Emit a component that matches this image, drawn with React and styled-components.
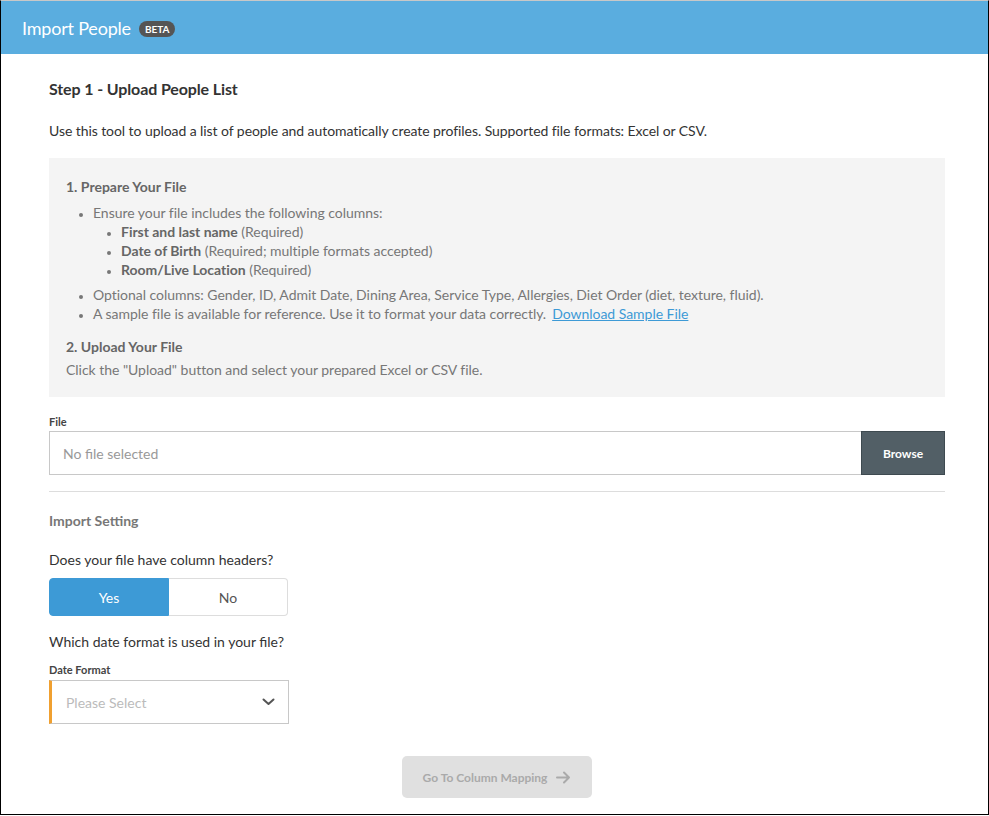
import React, { useState } from "react";
import styled, { createGlobalStyle } from "styled-components";

const Global = createGlobalStyle`
  html, body { margin: 0; padding: 0; background: #fff; }
  body { font-family: Lato, "Open Sans", Arial, sans-serif; color: #333; }
  * { box-sizing: border-box; }
`;

const Frame = styled.div`
  width: 989px;
  height: 815px;
  border-top: 1px solid #c8c8c8;
  border-left: 1px solid #000;
  border-right: 1px solid #000;
  border-bottom: 1px solid #000;
  display: flex;
  flex-direction: column;
  overflow: hidden;
`;

const Header = styled.header`
  height: 53px;
  background: #5aaddf;
  display: flex;
  align-items: center;
  padding-left: 21px;
  gap: 8px;
`;

const Title = styled.h1`
  margin: 0;
  font-size: 18px;
  font-weight: 400;
  color: #fff;
  letter-spacing: -0.2px;
`;

const Badge = styled.span`
  background: #555;
  color: #fff;
  font-size: 10px;
  font-weight: 700;
  border-radius: 9px;
  padding: 2px 6px;
  line-height: 12px;
  margin-top: 2px;
`;

const Content = styled.main`
  padding: 0 43px 0 48px;
  display: flex;
  flex-direction: column;
`;

const StepTitle = styled.h2`
  margin: 25px 0 0;
  font-size: 16px;
  font-weight: 700;
  color: #333;
  line-height: 20px;
  letter-spacing: -0.12px;
`;

const Intro = styled.p`
  margin: 22px 0 0;
  font-size: 14px;
  line-height: 20px;
  color: #333;
  letter-spacing: -0.07px;
`;

const InfoBox = styled.section`
  margin-top: 17px;
  background: #f4f4f4;
  padding: 19px 17px 18px;
  color: #777;
  font-size: 14px;
  line-height: 19px;
  letter-spacing: -0.03px;
`;

const InfoHead = styled.div`
  font-weight: 700;
  color: #666;
  font-size: 14px;
  line-height: 19px;
  letter-spacing: 0;
  margin-top: ${(p) => p.$mt || 0}px;
  margin-bottom: ${(p) => p.$mb || 0}px;
`;

const List = styled.ul`
  margin: ${(p) => p.$m || "0"};
  padding-left: ${(p) => p.$pl}px;
  list-style: disc;
  li::marker { font-size: 11px; }
`;

const Item = styled.li`
  line-height: 19px;
`;

const Strong = styled.b`
  font-weight: 700;
  color: #666;
`;

const Link = styled.a`
  color: #3d9ad6;
  text-decoration: underline;
  margin-left: 6px;
  cursor: pointer;
`;

const InfoText = styled.div`
  margin-top: 4px;
`;

const FieldLabel = styled.label`
  display: block;
  font-size: 11px;
  font-weight: 700;
  color: #444;
  line-height: 14px;
  margin: ${(p) => p.$mt}px 0 ${(p) => p.$mb}px;
`;

const FileRow = styled.div`
  display: flex;
  height: 44px;
  border: 1px solid #c8c8c8;
`;

const FileText = styled.div`
  flex: 1;
  display: flex;
  align-items: center;
  padding-left: 13px;
  color: #999;
  font-size: 14px;
`;

const BrowseButton = styled.button`
  width: 84px;
  margin: -1px -1px -1px 0;
  border: 1px solid #3e4a50;
  background: #525f66;
  color: #fff;
  font-family: inherit;
  font-weight: 700;
  font-size: 12px;
  cursor: pointer;
`;

const Divider = styled.hr`
  border: 0;
  border-top: 1px solid #ddd;
  margin: 16px 0 0;
`;

const SectionHead = styled.div`
  margin-top: 20px;
  font-size: 14px;
  font-weight: 700;
  color: #777;
  line-height: 18px;
`;

const Question = styled.div`
  margin-top: ${(p) => p.$mt}px;
  font-size: 14px;
  color: #333;
  line-height: 18px;
`;

const Toggle = styled.div`
  margin-top: 9px;
  display: flex;
  width: 239px;
  height: 38px;
`;

const ToggleOption = styled.button`
  flex: 1;
  font-family: inherit;
  font-size: 14px;
  cursor: pointer;
  border: 1px solid ${(p) => (p.$active ? "#3d9ad6" : "#ddd")};
  background: ${(p) => (p.$active ? "#3d9ad6" : "#fff")};
  color: ${(p) => (p.$active ? "#fff" : "#555")};
  border-radius: ${(p) => (p.$first ? "4px 0 0 4px" : "0 4px 4px 0")};
  ${(p) => (p.$first ? "" : "border-left: 0;")}
`;

const Select = styled.div`
  width: 240px;
  height: 44px;
  border: 1px solid #c8c8c8;
  border-left: 3px solid #f0a030;
  display: flex;
  align-items: center;
  justify-content: space-between;
  padding: 0 13px 0 14px;
  color: #bbb;
  font-size: 14px;
`;

const Footer = styled.div`
  display: flex;
  justify-content: center;
  margin-top: 32px;
`;

const NextButton = styled.button`
  width: 190px;
  height: 42px;
  border: 0;
  border-radius: 5px;
  background: #e0e0e0;
  color: #aaa;
  font-family: inherit;
  font-size: 12px;
  font-weight: 700;
  display: flex;
  align-items: center;
  justify-content: center;
  gap: 9px;
`;

export default function App() {
  const [headers, setHeaders] = useState(true);
  return (
    <>
      <Global />
      <Frame>
        <Header>
          <Title>Import People</Title>
          <Badge>BETA</Badge>
        </Header>
        <Content>
          <StepTitle>Step 1 - Upload People List</StepTitle>
          <Intro>
            Use this tool to upload a list of people and automatically create profiles. Supported file formats: Excel or CSV.
          </Intro>
          <InfoBox>
            <InfoHead $mb={7}>1. Prepare Your File</InfoHead>
            <List $pl={27}>
              <Item>
                Ensure your file includes the following columns:
                <List $pl={28}>
                  <Item><Strong>First and last name</Strong> (Required)</Item>
                  <Item><Strong>Date of Birth</Strong> (Required; multiple formats accepted)</Item>
                  <Item><Strong>Room/Live Location</Strong> (Required)</Item>
                </List>
              </Item>
            </List>
            <List $pl={27} $m="6px 0 0">
              <Item>Optional columns: Gender, ID, Admit Date, Dining Area, Service Type, Allergies, Diet Order (diet, texture, fluid).</Item>
              <Item>
                A sample file is available for reference. Use it to format your data correctly.
                <Link>Download Sample File</Link>
              </Item>
            </List>
            <InfoHead $mt={14}>2. Upload Your File</InfoHead>
            <InfoText>Click the "Upload" button and select your prepared Excel or CSV file.</InfoText>
          </InfoBox>

          <FieldLabel $mt={18} $mb={2}>File</FieldLabel>
          <FileRow>
            <FileText>No file selected</FileText>
            <BrowseButton>Browse</BrowseButton>
          </FileRow>

          <Divider />
          <SectionHead>Import Setting</SectionHead>
          <Question $mt={21}>Does your file have column headers?</Question>
          <Toggle>
            <ToggleOption $first $active={headers} onClick={() => setHeaders(true)}>Yes</ToggleOption>
            <ToggleOption $active={!headers} onClick={() => setHeaders(false)}>No</ToggleOption>
          </Toggle>
          <Question $mt={17}>Which date format is used in your file?</Question>
          <FieldLabel $mt={12} $mb={3}>Date Format</FieldLabel>
          <Select>
            <span>Please Select</span>
            <svg width="13" height="8" viewBox="0 0 13 8" fill="none">
              <path d="M1.5 1.5 L6.5 6 L11.5 1.5" stroke="#555" strokeWidth="2" strokeLinecap="round" strokeLinejoin="round" />
            </svg>
          </Select>
          <Footer>
            <NextButton>
              Go To Column Mapping
              <svg width="15" height="13" viewBox="0 0 15 13" fill="none">
                <path d="M1 6.5 H13 M8 1.5 L13 6.5 L8 11.5" stroke="#aaa" strokeWidth="2" strokeLinecap="round" strokeLinejoin="round" />
              </svg>
            </NextButton>
          </Footer>
        </Content>
      </Frame>
    </>
  );
}
